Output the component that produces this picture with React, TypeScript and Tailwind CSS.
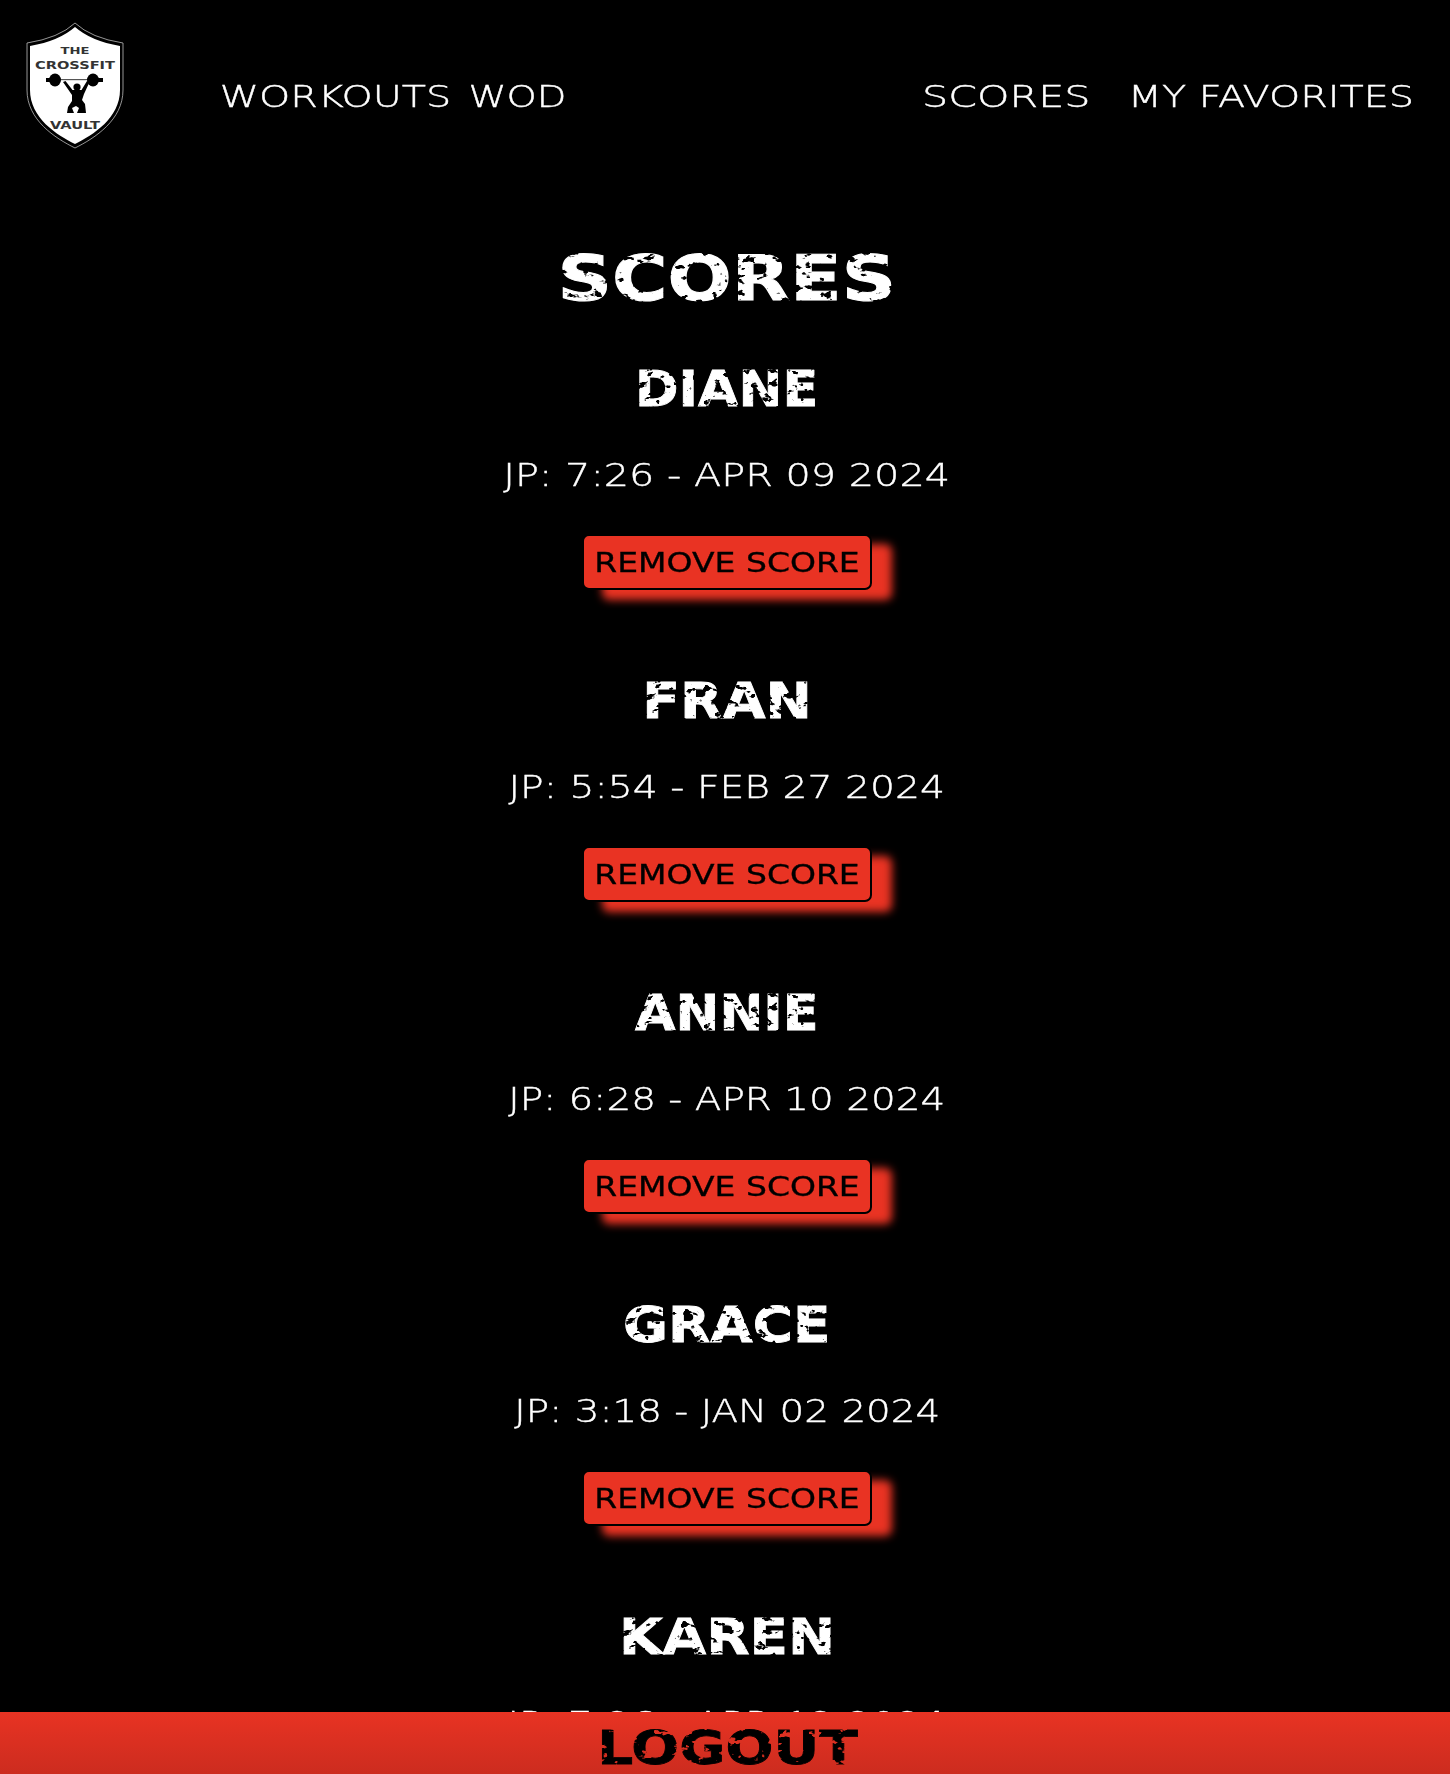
const heavy = { fontFamily: '"DejaVu Sans", sans-serif' };

const workouts = [
  { name: "DIANE", nameScale: "scale-x-[1.07]", score: "JP: 7:26 - APR 09 2024", scoreScale: "scale-x-[1.243]" },
  { name: "FRAN", nameScale: "scale-x-[1.13]", score: "JP: 5:54 - FEB 27 2024", scoreScale: "scale-x-[1.228]" },
  { name: "ANNIE", nameScale: "scale-x-[1.07]", score: "JP: 6:28 - APR 10 2024", scoreScale: "scale-x-[1.216]" },
  { name: "GRACE", nameScale: "scale-x-[1.12]", score: "JP: 3:18 - JAN 02 2024", scoreScale: "scale-x-[1.215]" },
  { name: "KAREN", nameScale: "scale-x-[1.15]", score: "JP: 7:26 - APR 12 2024", scoreScale: "scale-x-[1.22]" },
];

function Logo() {
  return (
    <svg viewBox="0 0 100 130" className="w-[100px] h-[130px] shrink-0 mt-[20px]" aria-label="The CrossFit Vault">
      <path d="M50 3Q66 18 98 23L98 70C98 100 70 118 50 128C30 118 2 100 2 70L2 23Q34 18 50 3Z" fill="#000" stroke="#bbb" strokeWidth="0.8" />
      <path d="M50 7Q66 21 95 26L95 70C95 98 68 115 50 124C32 115 5 98 5 70L5 26Q34 21 50 7Z" fill="#fff" />
      <g fontFamily='"DejaVu Sans", sans-serif' fontWeight="700" textAnchor="middle" fill="#333">
        <text x="50" y="33.5" fontSize="9" textLength="29" lengthAdjust="spacingAndGlyphs">THE</text>
        <text x="50" y="49" fontSize="10" textLength="80" lengthAdjust="spacingAndGlyphs">CROSSFIT</text>
        <text x="50" y="109" fontSize="10" textLength="50" lengthAdjust="spacingAndGlyphs">VAULT</text>
      </g>
      <g fill="#000">
        <rect x="22" y="59" width="55" height="1.2" fill="#555" />
        <rect x="21" y="58" width="5" height="4" />
        <rect x="73" y="58" width="5" height="4" />
        <ellipse cx="30" cy="60" rx="6" ry="6.5" />
        <ellipse cx="68" cy="60" rx="6" ry="6.5" />
        <circle cx="52" cy="67" r="3.6" />
        <path d="M38 62L40.5 61L47.5 70L56.5 70L62 61L64.5 62L59 74L57 80L60 84L61 93L52 93L54 88L51 86L47 88L49 93L42 93L43 87L47 81L47 75Z" />
      </g>
    </svg>
  );
}

function NavLink({ label, width, scale }: { label: string; width: string; scale: string }) {
  return (
    <a className={`flex justify-center ${width}`}>
      <span className={`block text-white text-[31px] leading-none whitespace-nowrap [-webkit-text-stroke:0.4px_white] ${scale}`} style={{ fontWeight: 200 }}>
        {label}
      </span>
    </a>
  );
}

export default function App() {
  return (
    <div className="relative h-[1774px] overflow-hidden bg-black text-white" style={heavy}>
      <svg className="absolute w-0 h-0" aria-hidden="true">
        <filter id="distress" x="-5%" y="-5%" width="110%" height="110%">
          <feTurbulence type="fractalNoise" baseFrequency="0.11 0.14" numOctaves="3" seed="7" result="n" />
          <feColorMatrix in="n" type="matrix" values="0 0 0 0 0  0 0 0 0 0  0 0 0 0 0  0 0 0 -14 9.8" result="m" />
          <feComposite in="SourceGraphic" in2="m" operator="in" />
        </filter>
      </svg>

      <header className="h-[192px] flex items-start justify-between pl-[25px] pr-[38px]">
        <div className="flex items-start">
          <Logo />
          <nav className="flex gap-[20px] ml-[96px] mt-[81px]">
            <NavLink label="WORKOUTS" width="w-[229px]" scale="scale-x-[1.28]" />
            <NavLink label="WOD" width="w-[95px]" scale="scale-x-[1.24]" />
          </nav>
        </div>
        <nav className="flex gap-[41px] mt-[81px]">
          <NavLink label="SCORES" width="w-[165px]" scale="scale-x-[1.33]" />
          <NavLink label="MY FAVORITES" width="w-[282px]" scale="scale-x-[1.28]" />
        </nav>
      </header>

      <main className="flex flex-col items-center pl-[4px]">
        <h1 className="mt-[57px] h-[61px] text-[62px] leading-[60px] font-bold scale-x-[1.22] [-webkit-text-stroke:1px_white] [filter:url(#distress)]">SCORES</h1>
        {workouts.map((w) => (
          <section key={w.name} className="h-[312px] flex flex-col items-center">
            <h2 className={`pt-[48px] h-[145px] text-[49px] leading-[64px] font-bold [-webkit-text-stroke:0.8px_white] [filter:url(#distress)] ${w.nameScale}`}>{w.name}</h2>
            <p className={`h-[40px] text-[32px] leading-[40px] whitespace-nowrap [-webkit-text-stroke:0.4px_white] ${w.scoreScale}`} style={{ fontWeight: 200 }}>{w.score}</p>
            <button className="mt-[39px] w-[290px] h-[56px] pt-[2px] rounded-[7px] border-2 border-black bg-[#e93323] shadow-[20px_10px_8px_#e93323]">
              <span className="block text-black text-[26px] leading-none whitespace-nowrap scale-x-[1.27] [-webkit-text-stroke:0.3px_black]" style={heavy}>REMOVE SCORE</span>
            </button>
          </section>
        ))}
      </main>

      <footer className="fixed left-0 right-0 bottom-0 h-[62px] flex items-center justify-center pl-[4px] pt-[8px] bg-gradient-to-b from-[#e83323] to-[#cc2c1f]">
        <span className="block text-black text-[47px] font-bold leading-none scale-x-[1.2] [-webkit-text-stroke:0.8px_black] [filter:url(#distress)]">LOGOUT</span>
      </footer>
    </div>
  );
}
